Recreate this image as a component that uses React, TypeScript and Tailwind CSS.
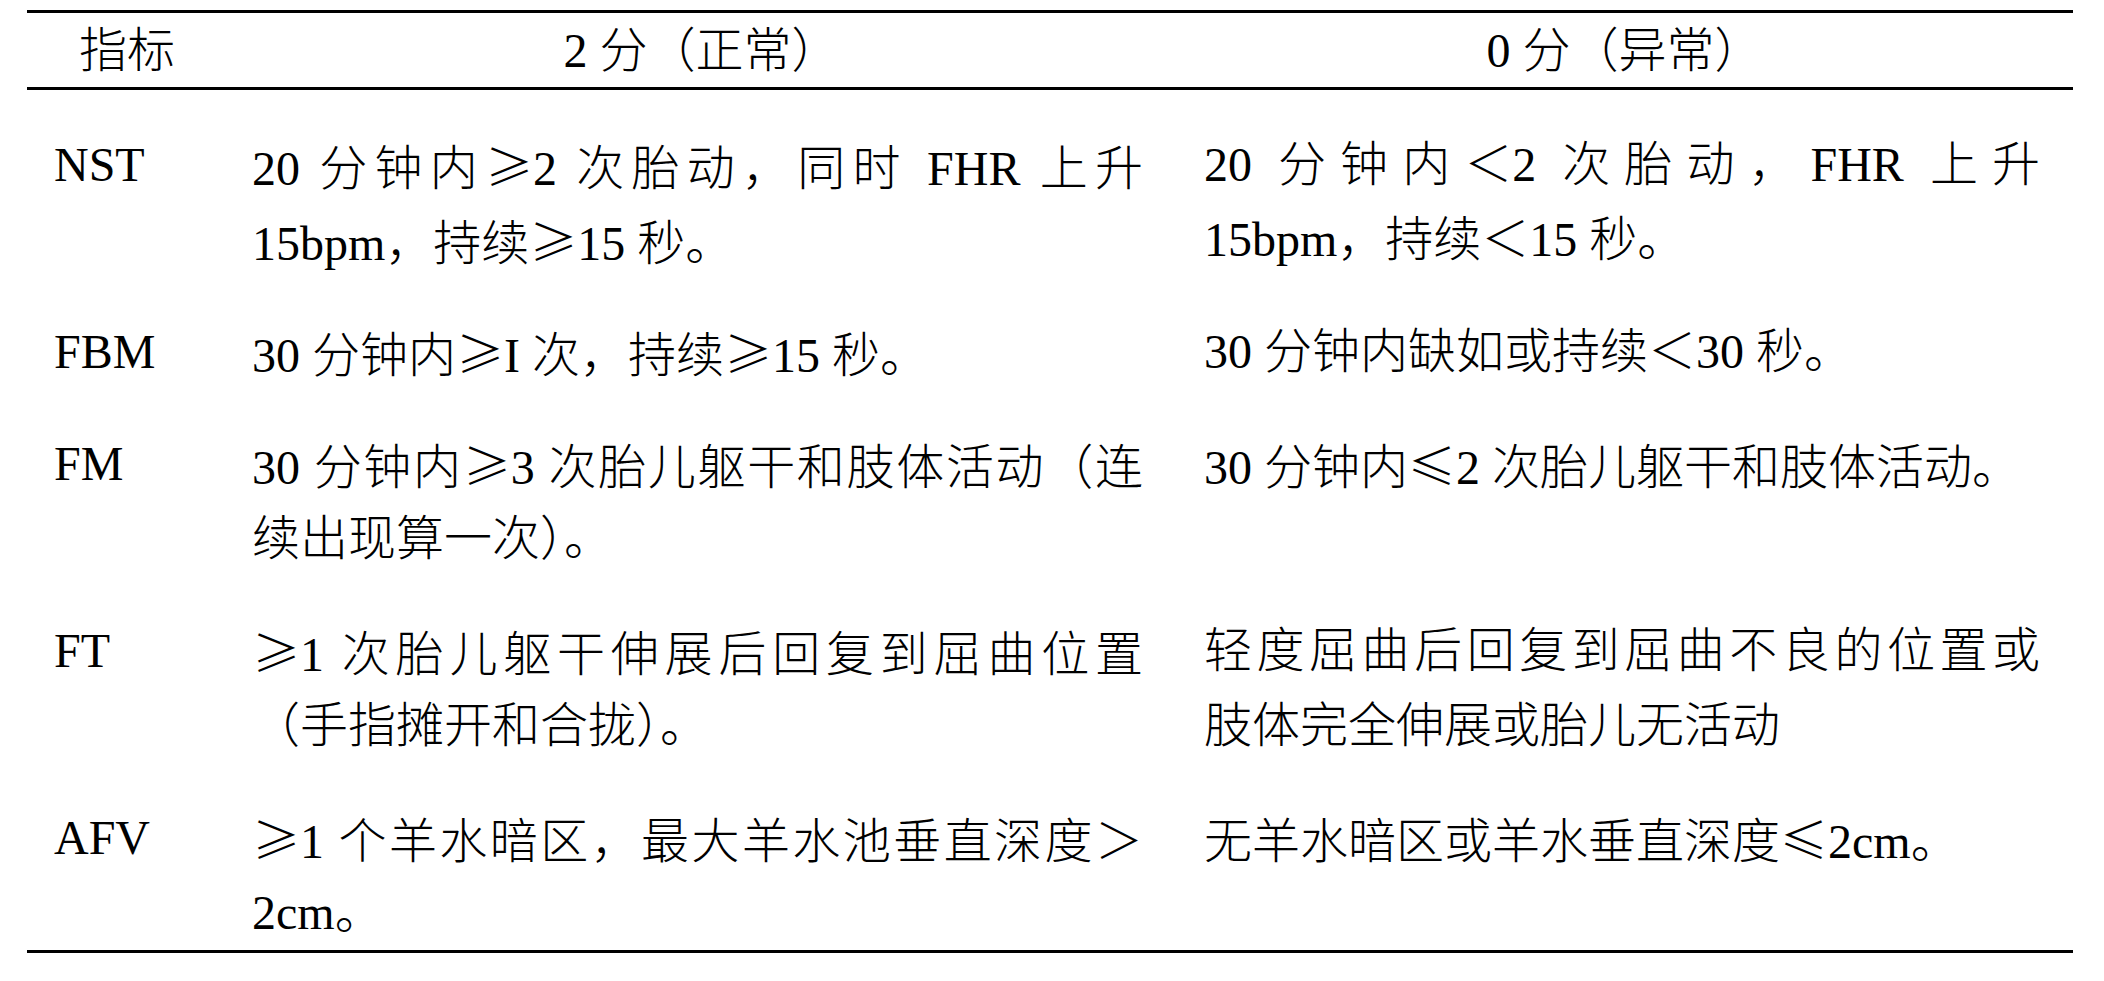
import React from "react";

type Row = { k: string; a: string[]; b: string[] };

const rows: Row[] = [
  {
    k: "NST",
    a: ["20 分钟内≥2 次胎动，同时 FHR 上升", "15bpm，持续≥15 秒。"],
    b: ["20 分钟内＜2 次胎动，FHR 上升", "15bpm，持续＜15 秒。"],
  },
  { k: "FBM", a: ["30 分钟内≥I 次，持续≥15 秒。"], b: ["30 分钟内缺如或持续＜30 秒。"] },
  {
    k: "FM",
    a: ["30 分钟内≥3 次胎儿躯干和肢体活动（连", "续出现算一次）。"],
    b: ["30 分钟内≤2 次胎儿躯干和肢体活动。"],
  },
  {
    k: "FT",
    a: ["≥1 次胎儿躯干伸展后回复到屈曲位置", "（手指摊开和合拢）。"],
    b: ["轻度屈曲后回复到屈曲不良的位置或", "肢体完全伸展或胎儿无活动"],
  },
  {
    k: "AFV",
    a: ["≥1 个羊水暗区，最大羊水池垂直深度＞", "2cm。"],
    b: ["无羊水暗区或羊水垂直深度≤2cm。"],
  },
];

function Txt({ s }: { s: string }) {
  const parts = s.split(/([≥≤])/);
  return (
    <>
      {parts.map((p, i) =>
        p === "≥" || p === "≤" ? (
          <span key={i} className="font-['Noto_Sans_CJK_SC',sans-serif]">
            {p}
          </span>
        ) : (
          <React.Fragment key={i}>{p}</React.Fragment>
        )
      )}
    </>
  );
}

function Cell({ lines, className }: { lines: string[]; className: string }) {
  return (
    <div className={className}>
      {lines.map((l, i) => (
        <div
          key={i}
          className={
            i < lines.length - 1
              ? "h-[75px] whitespace-nowrap text-justify [text-align-last:justify]"
              : "h-[75px] whitespace-nowrap text-left"
          }
        >
          <Txt s={l} />
        </div>
      ))}
    </div>
  );
}

export default function App() {
  return (
    <div className="w-[2104px] h-[981px] bg-white text-black overflow-hidden font-['Liberation_Serif','Noto_Sans_CJK_SC',serif] font-light text-[48px] leading-[75px]">
      <div className="ml-[27px] mt-[10px] w-[2046px]">
        <div className="grid grid-cols-[200px_949px_897px] border-t-[3px] border-b-[3px] border-black h-[80px] items-center">
          <div className="text-center h-[74px]">指标</div>
          <div className="text-center h-[74px]">2 分（正常）</div>
          <div className="text-center h-[74px]">0 分（异常）</div>
        </div>
        <div className="border-b-[3px] border-black">
          {rows.map((r) => (
            <div key={r.k} className="grid grid-cols-[200px_949px_897px] pt-[37px]">
              <div className="pl-[27px] h-[75px]">{r.k}</div>
              <Cell lines={r.a} className="pl-[25px] pr-[33px]" />
              <Cell lines={r.b} className="pl-[28px] pr-[33px]" />
            </div>
          ))}
        </div>
      </div>
    </div>
  );
}
